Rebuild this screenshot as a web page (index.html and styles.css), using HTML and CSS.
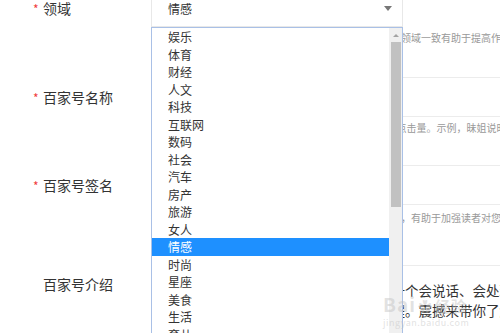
FILE: index.html
```html
<!DOCTYPE html>
<html>
<head>
    <title>百家号资料设置</title>
    <link rel="stylesheet" href="styles.css">
</head>
<body>
    <div class="page">
        <div class="form-row row-domain">
            <div class="label"><span class="req">*</span>领域</div>
            <div class="field">
                <div class="select">
                    <span class="select-value">情感</span>
                    <span class="caret"></span>
                    <div class="dropdown">
                        <ul class="options">
                            <li>娱乐</li>
                            <li>体育</li>
                            <li>财经</li>
                            <li>人文</li>
                            <li>科技</li>
                            <li>互联网</li>
                            <li>数码</li>
                            <li>社会</li>
                            <li>汽车</li>
                            <li>房产</li>
                            <li>旅游</li>
                            <li>女人</li>
                            <li class="active">情感</li>
                            <li>时尚</li>
                            <li>星座</li>
                            <li>美食</li>
                            <li>生活</li>
                            <li>育儿</li>
                            <li>影视</li>
                        </ul>
                        <div class="scrollbar">
                            <span class="up"></span>
                            <span class="thumb"></span>
                        </div>
                    </div>
                </div>
                <p class="hint">请选择您最擅长的内容领域，选择与您日常发布文章内容领域一致有助于提高作品推荐量</p>
            </div>
        </div>

        <div class="form-row row-name">
            <div class="label"><span class="req">*</span>百家号名称</div>
            <div class="field">
                <div class="input"></div>
                <p class="hint">名称需简短易记，能体现账号定位，好的名称可提升2倍点击量。示例，昧姐说时尚</p>
            </div>
        </div>

        <div class="form-row row-sign">
            <div class="label"><span class="req">*</span>百家号签名</div>
            <div class="field">
                <div class="input"></div>
                <p class="hint">签名可以用一句话概括您的账号定位和主要内容风格特点，有助于加强读者对您的印象</p>
            </div>
        </div>

        <div class="form-row row-intro">
            <div class="label"><span class="req"></span>百家号介绍</div>
            <div class="field">
                <div class="textarea">
                    <div>情感博主，每天分享真实情感故事，做一个会说话、会处理情感的知心人</div>
                    <div>理情感问题的博主，陪你走过每一段旅程。震撼来带你了解情感世界</div>
                </div>
            </div>
        </div>
    </div>

    <div class="watermark">
        <div class="wm-logo">Bai<span class="wm-paw">&#10047;</span><span class="wm-cn">经验</span></div>
        <div class="wm-url">jingyan.baidu.com</div>
    </div>
</body>
</html>
```

FILE: styles.css
```css
body {
    margin: 0;
    width: 500px;
    height: 333px;
    overflow: hidden;
    background: #fff;
    font-family: "Noto Sans CJK SC", "Liberation Sans", sans-serif;
    color: #333;
    position: relative;
}
.page {
    margin-top: -10px;
}
.form-row {
    display: grid;
    grid-template-columns: 151px 1fr;
    align-items: start;
}
.row-domain {
    margin-bottom: 31px;
}
.row-name {
    margin-bottom: 29px;
}
.row-sign {
    margin-bottom: 39px;
}
.label {
    padding-left: 33px;
    font-size: 14px;
    line-height: 40px;
    color: #333;
    white-space: nowrap;
}
.row-domain .label {
    line-height: 37px;
}
.row-intro .label {
    line-height: 20px;
    padding-top: 9px;
}
.req {
    display: inline-block;
    width: 10px;
    color: #f03c3c;
    font-size: 12px;
    line-height: 1;
}
.field {
    min-width: 0;
}
.select {
    position: relative;
    box-sizing: border-box;
    width: 252px;
    height: 37px;
    border: 1px solid #e8e8e8;
    border-top: none;
    padding: 0 10px 0 16px;
    display: flex;
    align-items: center;
    justify-content: space-between;
    font-size: 12px;
}
.caret {
    width: 0;
    height: 0;
    border-left: 4px solid transparent;
    border-right: 4px solid transparent;
    border-top: 5px solid #777;
}
.dropdown {
    position: absolute;
    top: calc(100% + 1px);
    left: -1px;
    width: 252px;
    height: 320px;
    box-sizing: border-box;
    border: 1px solid #a9c0e6;
    background: #fff;
    display: flex;
    z-index: 5;
}
.options {
    flex: 1;
    list-style: none;
    margin: 0;
    padding: 0;
    overflow: hidden;
}
.options li {
    height: 17.5px;
    line-height: 17.5px;
    padding-left: 16px;
    font-size: 12px;
    color: #333;
}
.options li.active {
    background: #1e90ff;
    color: #fff;
}
.scrollbar {
    width: 13px;
    background: #f0f0f0;
    display: flex;
    flex-direction: column;
    align-items: center;
}
.scrollbar .up {
    margin: 6px 0 5px;
    width: 0;
    height: 0;
    border-left: 3px solid transparent;
    border-right: 3px solid transparent;
    border-bottom: 3px solid #a3a3a3;
}
.scrollbar .thumb {
    width: 10px;
    height: 165px;
    background: #c1c1c1;
}
.hint {
    margin: 3px 0 0;
    font-size: 10px;
    line-height: 16px;
    color: #999;
    white-space: nowrap;
}
.row-sign .hint {
    margin-top: 5px;
}
.input {
    width: 500px;
    height: 40px;
    box-sizing: border-box;
    border: 1px solid #ececec;
}
.textarea {
    width: 500px;
    height: 100px;
    box-sizing: border-box;
    border: 1px solid #ececec;
    padding: 14px 0 0 10px;
    font-size: 13.5px;
    line-height: 20px;
    color: #333;
    white-space: nowrap;
}
.watermark {
    position: absolute;
    left: 383px;
    top: 294px;
    color: rgba(190, 190, 190, 0.45);
    z-index: 10;
    pointer-events: none;
}
.wm-logo {
    font-size: 19px;
    font-weight: bold;
    line-height: 20px;
    letter-spacing: 1px;
}
.wm-paw {
    font-size: 14px;
    margin: 0 2px;
}
.wm-cn {
    font-size: 15px;
}
.wm-url {
    font-size: 9px;
    line-height: 10px;
    margin-top: 2px;
    letter-spacing: 0.5px;
}
```
